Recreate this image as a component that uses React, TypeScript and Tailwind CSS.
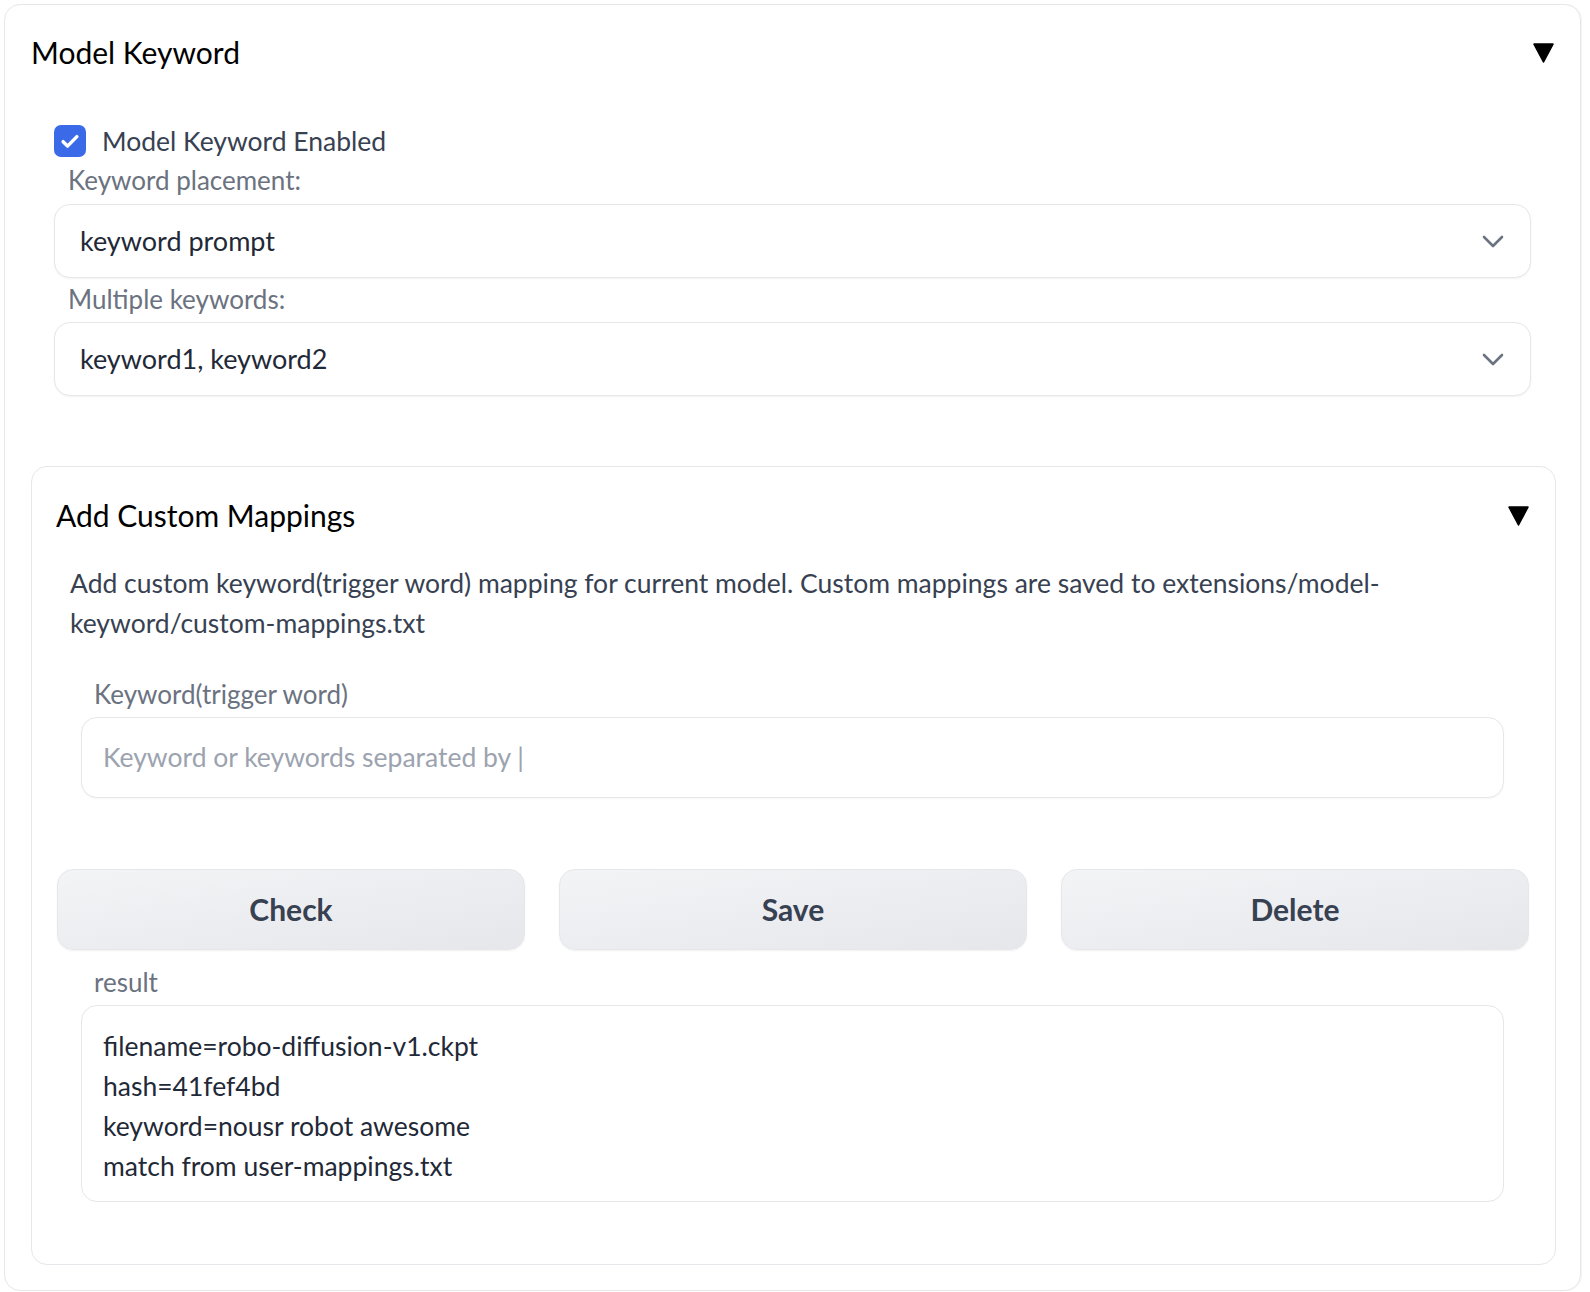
const font = { fontFamily: '"Source Sans Pro", Lato, "Noto Sans", sans-serif' };

function Caret() {
  return (
    <svg viewBox="0 0 20 20" className="h-[21px] w-[21px]" aria-hidden>
      <path d="M1 2h18L10 19z" fill="#000" strokeLinejoin="round" stroke="#000" strokeWidth="1.5" />
    </svg>
  );
}

function Chevron() {
  return (
    <svg viewBox="0 0 22 13" className="h-[13px] w-[22px]" fill="none" aria-hidden>
      <path d="M2 2l9 9 9-9" stroke="#6b7280" strokeWidth="2.6" strokeLinecap="round" strokeLinejoin="round" />
    </svg>
  );
}

function Dropdown({ value }: { value: string }) {
  return (
    <div className="flex h-[74px] items-center justify-between rounded-[16px] border border-[#e5e7eb] bg-white pl-[25px] pr-[26px] shadow-[0_1px_2px_rgba(0,0,0,0.05)]">
      <span className="text-[27px] text-[#1f2937]">{value}</span>
      <Chevron />
    </div>
  );
}

function ActionButton({ label }: { label: string }) {
  return (
    <button className="flex h-[81px] flex-1 items-center justify-center rounded-[16px] border border-[#e5e7eb] bg-gradient-to-br from-[#f3f4f6] to-[#e5e7eb] text-[30px] font-bold text-[#374151] shadow-[0_1px_2px_rgba(0,0,0,0.06)]">
      {label}
    </button>
  );
}

export default function App() {
  return (
    <div className="min-h-[1292px] bg-white pl-[4px] pt-[4px]" style={font}>
      <div className="flex h-[1287px] w-[1577px] flex-col rounded-[16px] border border-[#e5e7eb] pl-[26px] pr-[24px] shadow-[1px_0_0_#f3f4f6]">
        {/* Accordion header */}
        <div className="flex h-[94px] items-center justify-between pr-[2px]">
          <span className="text-[30px] text-black">Model Keyword</span>
          <Caret />
        </div>

        {/* Checkbox + dropdowns */}
        <div className="mt-[26px] pl-[23px] pr-[25px]">
          <label className="flex h-[32px] items-center gap-[16px]">
            <span className="flex h-[32px] w-[32px] items-center justify-center rounded-[7px] bg-[#3b6ae8]">
              <svg viewBox="0 0 16 16" className="h-[22px] w-[22px]" fill="none">
                <path d="M3 8.5l3.2 3.2L13 4.8" stroke="#fff" strokeWidth="2.5" strokeLinecap="round" strokeLinejoin="round" />
              </svg>
            </span>
            <span className="text-[26.5px] leading-[32px] text-[#374151]">Model Keyword Enabled</span>
          </label>

          <div className="mt-[3px] pl-[14px] text-[26px] leading-[40px] text-[#6b7280]">Keyword placement:</div>
          <div className="mt-[4px]">
            <Dropdown value="keyword prompt" />
          </div>
          <div className="mt-[1px] pl-[14px] text-[26px] leading-[40px] text-[#6b7280]">Multiple keywords:</div>
          <div className="mt-[3px]">
            <Dropdown value="keyword1, keyword2" />
          </div>
        </div>

        {/* Nested accordion */}
        <div className="mt-[70px] flex h-[799px] flex-col rounded-[16px] border border-[#e5e7eb] pl-[24px] pr-[26px]">
          <div className="flex h-[96px] items-center justify-between">
            <span className="text-[30px] text-black">Add Custom Mappings</span>
            <Caret />
          </div>

          <p className="pl-[14px] text-[26.5px] leading-[40px] text-[#374151]">
            Add custom keyword(trigger word) mapping for current model. Custom mappings are saved to extensions/model-keyword/custom-mappings.txt
          </p>

          <div className="mt-[31px] px-[25px]">
            <div className="pl-[13px] text-[26px] leading-[40px] text-[#6b7280]">Keyword(trigger word)</div>
            <div className="mt-[3px] flex h-[81px] items-center rounded-[16px] border border-[#e5e7eb] bg-white pl-[21px] shadow-[0_1px_2px_rgba(0,0,0,0.04)]">
              <span className="text-[26.5px] text-[#9ca3af]">Keyword or keywords separated by |</span>
            </div>
          </div>

          <div className="mt-[71px] flex gap-[34px] pl-[1px]">
            <ActionButton label="Check" />
            <ActionButton label="Save" />
            <ActionButton label="Delete" />
          </div>

          <div className="mt-[12px] px-[25px]">
            <div className="pl-[13px] text-[26px] leading-[40px] text-[#6b7280]">result</div>
            <div className="mt-[3px] h-[197px] rounded-[16px] border border-[#e5e7eb] bg-white pl-[21px] pt-[20px] text-[26.5px] leading-[40px] text-[#1f2937]">
              <div>filename=robo-diffusion-v1.ckpt</div>
              <div>hash=41fef4bd</div>
              <div>keyword=nousr robot awesome</div>
              <div>match from user-mappings.txt</div>
            </div>
          </div>
        </div>
      </div>
    </div>
  );
}
